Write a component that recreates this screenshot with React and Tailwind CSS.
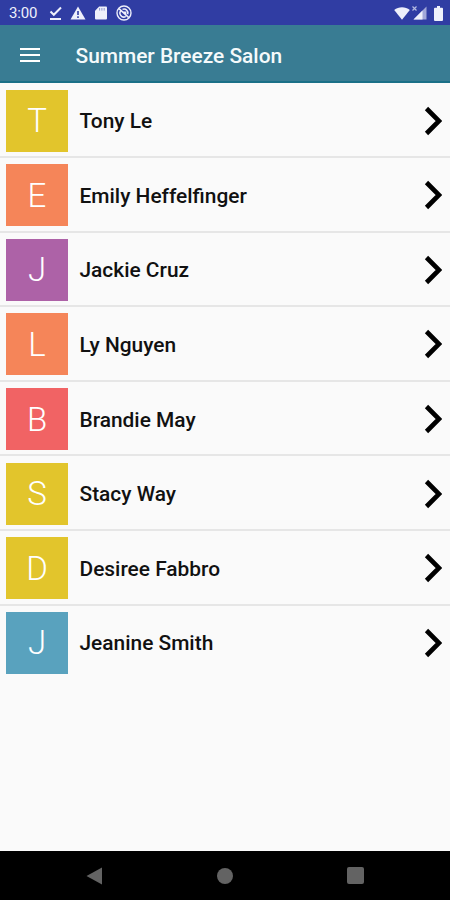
import React from 'react';

const employees = [
    { name: 'Tony Le', color: 'bg-[#e2c52c]' },
    { name: 'Emily Heffelfinger', color: 'bg-[#f58559]' },
    { name: 'Jackie Cruz', color: 'bg-[#ad62a7]' },
    { name: 'Ly Nguyen', color: 'bg-[#f58559]' },
    { name: 'Brandie May', color: 'bg-[#f16364]' },
    { name: 'Stacy Way', color: 'bg-[#e2c52c]' },
    { name: 'Desiree Fabbro', color: 'bg-[#e2c52c]' },
    { name: 'Jeanine Smith', color: 'bg-[#59a2be]' },
];

const StatusBar = () => (
    <div className="h-[25px] shrink-0 bg-[#303da3] flex items-center justify-between pt-px pl-[9px] pr-[7px] text-[#eef0fb]">
        <div className="flex items-center">
            <span className="w-[40px] pt-px text-[15px] leading-none tracking-[-0.2px]">3:00</span>
            {/* download done */}
            <svg className="w-[13px] h-[14px]" viewBox="0 0 13 14" fill="none" stroke="currentColor" strokeWidth="2">
                <path d="M1.5 5.5 4.8 8.8 12 1.5M1 13h11" />
            </svg>
            <svg className="w-[16px] h-[14px] ml-[8px]" viewBox="0 0 16 14">
                <path fill="currentColor" d="M8 0.5 15.5 13.5H.5z" />
                <path stroke="#303da3" strokeWidth="1.6" d="M8 5v4M8 10.3v1.6" />
            </svg>
            {/* sd card */}
            <svg className="w-[12px] h-[14px] ml-[9px]" viewBox="0 0 12 14">
                <path fill="currentColor" d="M4.2 0.5H11a1 1 0 0 1 1 1v11a1 1 0 0 1-1 1H1a1 1 0 0 1-1-1V4.7z" />
                <path stroke="#303da3" strokeOpacity="0.5" strokeWidth="1" d="M4.6 2v2.6M6.9 2v2.6M9.2 2v2.6" />
            </svg>
            <svg className="w-[16px] h-[16px] ml-[9px]" viewBox="0 0 16 16" fill="none" stroke="currentColor">
                <circle cx="8" cy="8" r="7" strokeWidth="1.4" />
                <path strokeWidth="1.5" d="M5.2 5.4a3.8 3.8 0 0 0 4.6 6M6.5 4.4a3.9 3.9 0 0 1 5.2 4.8" />
                <path strokeWidth="1.6" d="m3 3.6 9.8 9M7.4 7.2h2.2v2" />
            </svg>
        </div>
        <div className="flex items-center">
            <svg className="w-[16px] h-[13px]" viewBox="0 0 16 13">
                <path fill="currentColor" d="M8 12.8.2 3.1C4.5-.6 11.5-.6 15.8 3.1z" />
            </svg>
            <svg className="w-[15px] h-[14px] ml-[2px]" viewBox="0 0 15 14">
                <path fill="currentColor" fillOpacity="0.6" d="M14.5 0.5v13h-13z" />
                <path fill="currentColor" d="M10.5 4.5v9h-9z" />
                <path stroke="currentColor" strokeOpacity="0.7" strokeWidth="1.2" d="m.5.5 4 4M4.5.5l-4 4" />
            </svg>
            <svg className="w-[9px] h-[15px] ml-[7px]" viewBox="0 0 9 15">
                <path fill="currentColor" d="M3 0h3v1.8h2a1 1 0 0 1 1 1V14a1 1 0 0 1-1 1H1a1 1 0 0 1-1-1V2.8a1 1 0 0 1 1-1h2z" />
            </svg>
        </div>
    </div>
);

const EmployeeRow = ({ name, color }) => (
    <li className="h-[74.6px] flex items-center pt-[2px] pl-[6px] pr-[8px] border-b-2 border-[#e6e6e6] last:border-transparent">
        <div className={`w-[62px] h-[62px] shrink-0 flex items-center justify-center ${color}`}>
            <span className="text-[33px] leading-none font-light text-white">{name[0]}</span>
        </div>
        <span className="flex-1 ml-[11.5px] pt-[2px] text-[20.9px] leading-none font-medium text-[#111]">{name}</span>
        <svg className="w-[18px] h-[30px]" viewBox="0 0 18 30" fill="none" stroke="#000" strokeWidth="4.6">
            <path d="M2.5 2.5 15 15 2.5 27.5" />
        </svg>
    </li>
);

const NavBar = () => (
    <div className="h-[49px] shrink-0 bg-black text-[#636363] flex items-center justify-between pl-[86px] pr-[86px]">
        <svg className="w-[17px] h-[18px]" viewBox="0 0 17 18">
            <path fill="currentColor" d="M16 .5v17L.5 9z" />
        </svg>
        <div className="w-[16px] h-[16px] rounded-full bg-current" />
        <div className="w-[17px] h-[17px] rounded-[2px] bg-current" />
    </div>
);

export default function App() {
    return (
        <div className="w-[450px] h-[900px] flex flex-col overflow-hidden bg-[#fafafa] font-[Roboto,sans-serif]">
            <StatusBar />
            <header className="h-[58px] shrink-0 flex items-center bg-[#397c93] border-b-2 border-[#1b7087] pt-[4px] pl-[20px]">
                <div className="w-[20px] flex flex-col gap-[4px]">
                    <div className="h-[2px] bg-white" />
                    <div className="h-[2px] bg-white" />
                    <div className="h-[2px] bg-white" />
                </div>
                <h1 className="ml-[35.5px] pt-[2px] text-[20.9px] leading-none font-medium text-[#f5fafb]">Summer Breeze Salon</h1>
            </header>
            <ul className="flex-1 pt-[0.4px]">
                {employees.map((employee) => (
                    <EmployeeRow key={employee.name} {...employee} />
                ))}
            </ul>
            <NavBar />
        </div>
    );
}
